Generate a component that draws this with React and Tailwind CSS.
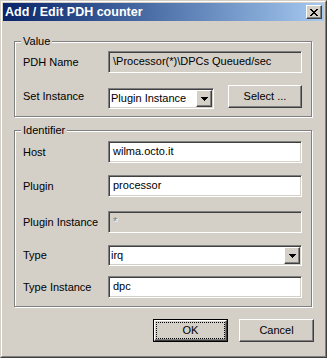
import React from "react";

const raised =
  "border border-t-white border-l-white border-r-[#404040] border-b-[#404040] bg-[#d4d0c8] shadow-[inset_-1px_-1px_0_#808080,inset_1px_1px_0_#d4d0c8]";
const sunken =
  "border border-t-[#808080] border-l-[#808080] border-r-white border-b-white shadow-[inset_1px_1px_0_#404040,inset_-1px_-1px_0_#d4d0c8]";

const closeGlyph = [
  [0, 0, 2], [6, 0, 2],
  [1, 1, 2], [5, 1, 2],
  [2, 2, 4],
  [3, 3, 2],
  [2, 4, 4],
  [1, 5, 2], [5, 5, 2],
  [0, 6, 2], [6, 6, 2],
];

function CloseIcon() {
  return (
    <svg width="8" height="7" viewBox="0 0 8 7" shapeRendering="crispEdges">
      {closeGlyph.map(([x, y, w], i) => (
        <rect key={i} x={x} y={y} width={w} height="1" fill="#000" />
      ))}
    </svg>
  );
}

function ArrowIcon() {
  return (
    <svg width="7" height="4" viewBox="0 0 7 4" shapeRendering="crispEdges">
      <rect x="0" y="0" width="7" height="1" fill="#000" />
      <rect x="1" y="1" width="5" height="1" fill="#000" />
      <rect x="2" y="2" width="3" height="1" fill="#000" />
      <rect x="3" y="3" width="1" height="1" fill="#000" />
    </svg>
  );
}

function Group({ title, className = "", children }) {
  return (
    <div className={`relative w-[298px] border border-[#808080] shadow-[1px_1px_0_#fff,inset_1px_1px_0_#fff] ${className}`}>
      <span className="absolute left-[6px] top-[-7px] bg-[#d4d0c8] px-[2px] leading-[13px]">{title}</span>
      {children}
    </div>
  );
}

function Row({ label, className = "", children }) {
  return (
    <div className={`flex items-center ${className}`}>
      <span className="w-[85px] shrink-0 leading-[13px]">{label}</span>
      {children}
    </div>
  );
}

// readOnly: grey face, normal text; disabled: grey face, etched grey text
function TextField({ value, disabled = false, readOnly = false }) {
  let look = "bg-white";
  if (disabled) look = "bg-[#d4d0c8] text-[#808080] [text-shadow:1px_1px_0_#fff]";
  else if (readOnly) look = "bg-[#d4d0c8]";
  return (
    <div className={`h-[22px] w-[194px] pl-[4px] pt-[3px] leading-[13px] ${sunken} ${look}`}>
      {value}
    </div>
  );
}

function Combo({ value, width }) {
  return (
    <div className={`flex h-[21px] ${width} bg-white p-[1px] ${sunken}`}>
      <span className="flex-1 self-center pl-[1px] leading-[13px]">{value}</span>
      <span className={`flex h-full w-[16px] items-center justify-center ${raised}`}>
        <ArrowIcon />
      </span>
    </div>
  );
}

function Button({ children, isDefault = false, className = "" }) {
  if (isDefault) {
    return (
      <div className={`h-[23px] w-[75px] border border-black ${className}`}>
        <div className={`flex h-full w-full p-[1px] ${raised}`}>
          <div className="flex flex-1 items-center justify-center border border-dotted border-black leading-[13px]">
            {children}
          </div>
        </div>
      </div>
    );
  }
  return (
    <div className={`flex h-[23px] items-center justify-center leading-[13px] ${raised} ${className}`}>
      {children}
    </div>
  );
}

export default function App() {
  return (
    <div className="h-[358px] w-[327px] border border-t-[#d4d0c8] border-l-[#d4d0c8] border-r-[#404040] border-b-[#404040] font-['Liberation_Sans',Arial,sans-serif] text-[11px] text-black">
      <div className="flex h-full flex-col border border-t-white border-l-white border-r-[#808080] border-b-[#808080] bg-[#d4d0c8] p-[1px]">
        <div className="flex h-[18px] shrink-0 items-center bg-gradient-to-r from-[#0a246a] to-[#a6caf0] pl-[2px] pr-[2px]">
          <span className="flex-1 text-[12.5px] font-bold leading-[14px] text-white">Add / Edit PDH counter</span>
          <span className={`flex h-[14px] w-[16px] items-center justify-center ${raised}`}>
            <CloseIcon />
          </span>
        </div>

        <div className="flex flex-1 flex-col pl-[11px] pr-[10px] pt-[20px]">
          <Group title="Value" className="h-[76px] pl-[8px] pt-[9px]">
            <Row label="PDH Name">
              <TextField value="\Processor(*)\DPCs Queued/sec" readOnly />
            </Row>
            <div className="mt-[12px] flex h-[23px] items-center">
              <span className="w-[85px] shrink-0 leading-[13px]">Set Instance</span>
              <div className="mt-[4px]">
                <Combo value="Plugin Instance" width="w-[106px]" />
              </div>
              <Button className="ml-[14px] w-[74px]">Select ...</Button>
            </div>
          </Group>

          <Group title="Identifier" className="mt-[13px] h-[177px] pl-[8px] pt-[10px]">
            <Row label="Host">
              <TextField value="wilma.octo.it" />
            </Row>
            <Row label="Plugin" className="mt-[12px]">
              <TextField value="processor" />
            </Row>
            <Row label="Plugin Instance" className="mt-[14px]">
              <TextField value="*" disabled />
            </Row>
            <Row label="Type" className="mt-[12px]">
              <Combo value="irq" width="w-[194px]" />
            </Row>
            <Row label="Type Instance" className="mt-[10px]">
              <TextField value="dpc" />
            </Row>
          </Group>

          <div className="mt-[12px] flex justify-end gap-[11px]">
            <Button isDefault>OK</Button>
            <Button className="w-[75px]">Cancel</Button>
          </div>
        </div>
      </div>
    </div>
  );
}
